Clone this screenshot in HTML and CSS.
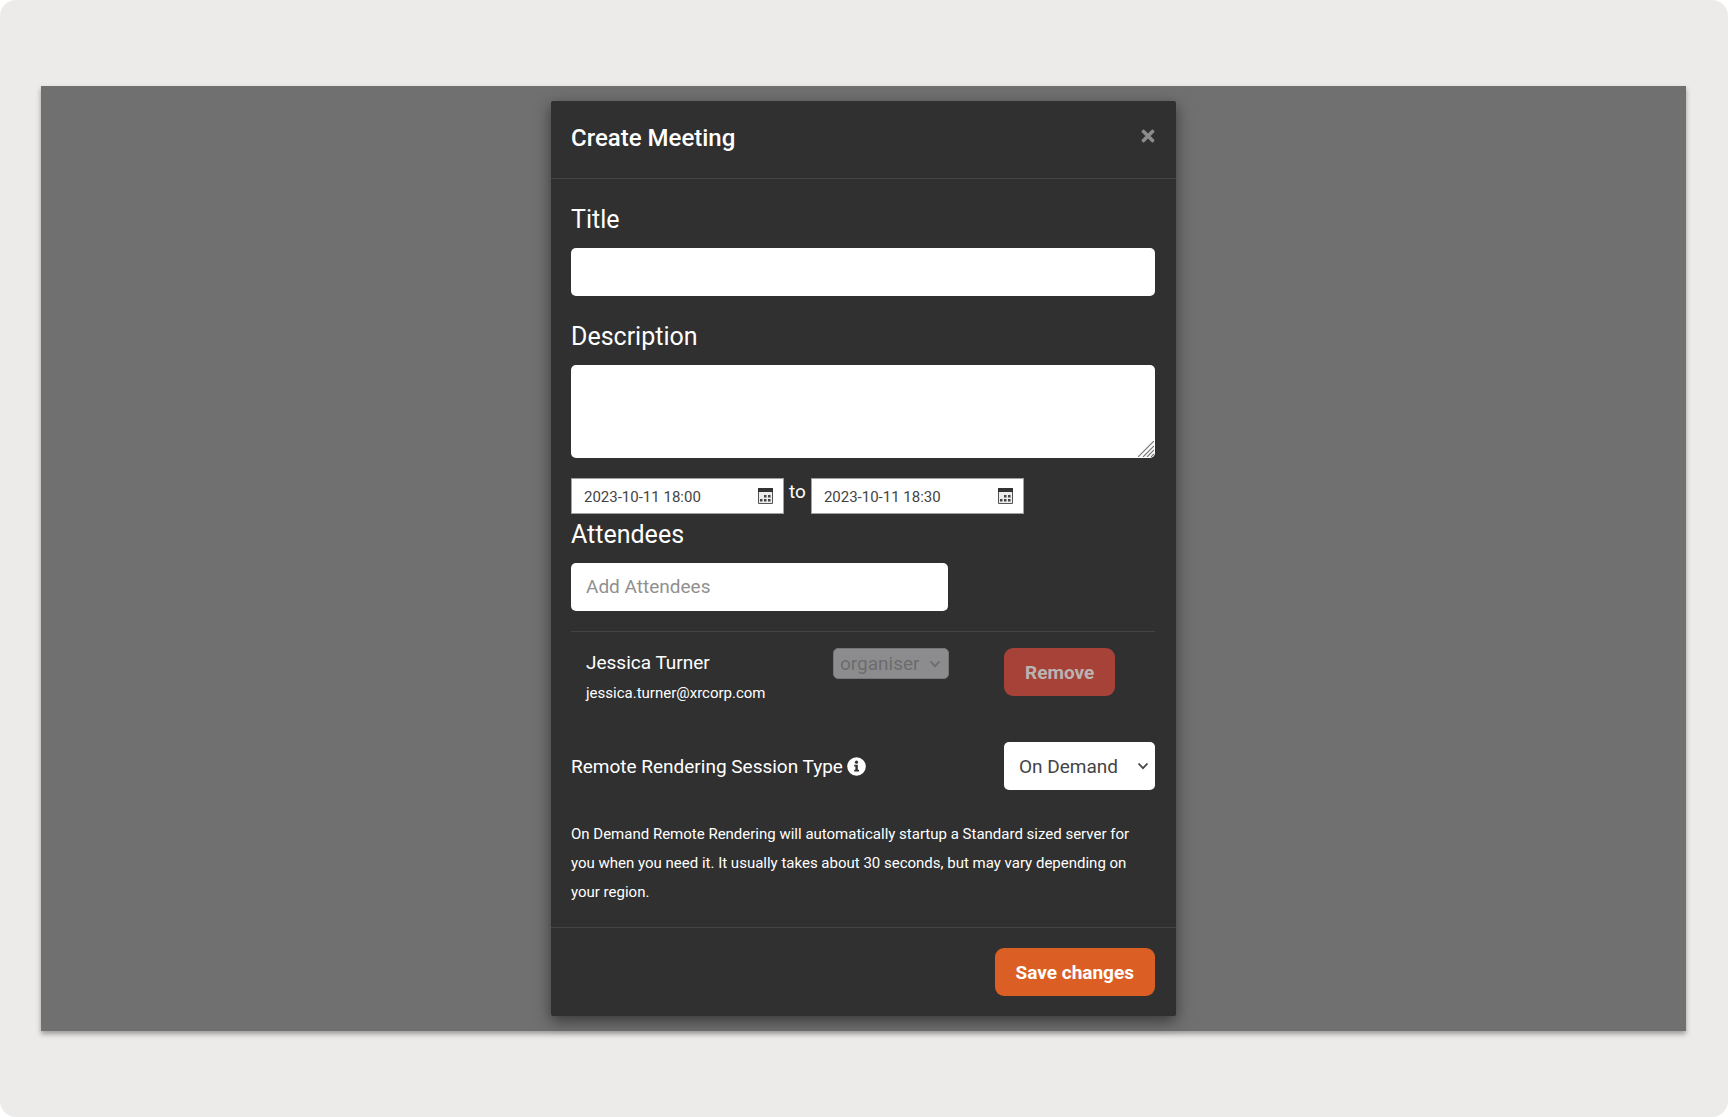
FILE: index.html
```html
<!DOCTYPE html>
<html lang="en">
<head>
<meta charset="utf-8">
<meta name="viewport" content="width=device-width, initial-scale=1">
<title>Create Meeting</title>
<link rel="stylesheet" href="styles.css">
</head>
<body>
<div class="page">
  <main class="stage">
    <form class="modal" role="dialog" aria-labelledby="dialog-title">
      <header class="modal-header">
        <h1 class="modal-title" id="dialog-title">Create Meeting</h1>
        <button class="close" type="button" aria-label="Close">
          <svg viewBox="0 0 14 14" width="14" height="14" aria-hidden="true"><path d="M2.5 2.5l9 9M11.5 2.5l-9 9" stroke="currentColor" stroke-width="3.6" stroke-linecap="round"/></svg>
        </button>
      </header>

      <div class="modal-body">
        <div class="field">
          <label class="label" for="title">Title</label>
          <input class="control" id="title" type="text">
        </div>
        <div class="field">
          <label class="label" for="description">Description</label>
          <div class="area-wrap">
            <textarea class="control area" id="description"></textarea>
            <svg class="grip" viewBox="0 0 16 16" width="16" height="16" aria-hidden="true"><path d="M0 16L16 0M5 16L16 5M9 16l7-7M13 16l3-3" stroke="#777" stroke-width="1.2"/></svg>
          </div>
        </div>

        <div class="dates">
          <div class="date">
            <input class="date-input" type="text" value="2023-10-11 18:00" aria-label="Start">
            <button class="date-button" type="button" aria-label="Pick start">
              <svg viewBox="0 0 15 16" width="15" height="16" aria-hidden="true"><path d="M.5.5h14v15H.5z" fill="#ececec" stroke="#555"/><path d="M0 0h15v4H0z" fill="#333"/><path d="M6 7h2.500v2.500H6zM10 7h2.500v2.500H10zM2 11h2.500v2.500H2zM6 11h2.500v2.500H6zM10 11h2.500v2.500H10z" fill="#444"/></svg>
            </button>
          </div>
          <span class="to">to</span>
          <div class="date">
            <input class="date-input" type="text" value="2023-10-11 18:30" aria-label="End">
            <button class="date-button" type="button" aria-label="Pick end">
              <svg viewBox="0 0 15 16" width="15" height="16" aria-hidden="true"><path d="M.5.5h14v15H.5z" fill="#ececec" stroke="#555"/><path d="M0 0h15v4H0z" fill="#333"/><path d="M6 7h2.500v2.500H6zM10 7h2.500v2.500H10zM2 11h2.500v2.500H2zM6 11h2.500v2.500H6zM10 11h2.500v2.500H10z" fill="#444"/></svg>
            </button>
          </div>
        </div>

        <div class="field">
          <label class="label" for="attendees">Attendees</label>
          <input class="control attendees" id="attendees" type="text" placeholder="Add Attendees">
        </div>

        <div class="attendee">
          <div class="person">
            <div class="name">Jessica Turner</div>
            <div class="email">jessica.turner@xrcorp.com</div>
          </div>
          <div class="select role">
            <select class="select-box" aria-label="Role" disabled><option>organiser</option></select>
            <svg class="chevron" viewBox="0 0 12 8" width="12" height="8" aria-hidden="true"><path d="M1.500 1.500L6 6.200l4.500-4.700" fill="none" stroke="currentColor" stroke-width="1.800"/></svg>
          </div>
          <button class="button remove" type="button" disabled>Remove</button>
        </div>

        <div class="session">
          <label class="session-label" for="session">Remote Rendering Session Type
            <svg class="info" viewBox="0 0 19 19" width="19" height="19" aria-hidden="true"><circle cx="9.500" cy="9.500" r="9.300" fill="#fff"/><circle cx="9.500" cy="5.200" r="1.600" fill="#303030"/><path d="M7.200 7.800h3.600v5h1.200v1.700H7.200v-1.700h1.200V9.500H7.200z" fill="#303030"/></svg>
          </label>
          <div class="select demand">
            <select class="select-box" id="session"><option>On Demand</option></select>
            <svg class="chevron" viewBox="0 0 12 8" width="12" height="8" aria-hidden="true"><path d="M1.500 1.500L6 6.200l4.500-4.700" fill="none" stroke="currentColor" stroke-width="1.800"/></svg>
          </div>
        </div>

        <p class="hint">On Demand Remote Rendering will automatically startup a Standard sized server for you when you need it. It usually takes about 30 seconds, but may vary depending on your region.</p>
      </div>

      <footer class="modal-footer">
        <button class="button save" type="submit">Save changes</button>
      </footer>
    </form>
  </main>
</div>
</body>
</html>
```
FILE: styles.css
```css
* { box-sizing: border-box; }

body {
  margin: 0;
  background: #fff;
  color: #fff;
  font: 19px/29px Roboto, "Liberation Sans", sans-serif;
}

button, input, select, textarea { font: inherit; margin: 0; }

.page {
  min-height: 100vh;
  padding: 86px 42px 86px 41px;
  border-radius: 16px;
  background: #ecebe9;
}

.stage {
  padding: 15px;
  background: #707070;
  box-shadow: 0 3px 5px rgba(0, 0, 0, .35);
}

.modal {
  max-width: 625px;
  margin: 0 auto;
  background: #303030;
  border-radius: 2px;
  box-shadow: 0 5px 15px rgba(0, 0, 0, .5);
}

.modal-header {
  display: flex;
  justify-content: space-between;
  align-items: flex-start;
  padding: 20px 21px 23px 20px;
  border-bottom: 1px solid #444;
}

.modal-title { margin: 0; font-size: 24px; line-height: 34px; font-weight: 500; }

.close {
  display: flex;
  padding: 8px 0;
  border: 0;
  background: none;
  color: #8c8c8c;
}

.modal-body { padding: 20px 21px 20px 20px; }

.field { margin-bottom: 20px; }

.label {
  display: block;
  margin-bottom: 8px;
  font-size: 25px;
  line-height: 41px;
}

.control {
  display: block;
  width: 100%;
  height: 48px;
  padding: 0 15px 2px;
  border: 0;
  border-radius: 5px;
  background: #fff;
  color: #444;
}

.control::placeholder { color: #909090; opacity: 1; }

.area-wrap { position: relative; }
.area { height: 93px; padding: 10px 15px; resize: none; }
.grip { position: absolute; right: 1px; bottom: 1px; }
.attendees { max-width: 377px; }

.dates { display: flex; gap: 5px; }

.date {
  display: flex;
  align-items: center;
  width: 213px;
  height: 36px;
  padding: 0 10px 0 12px;
  border: 1px solid #a0a0a0;
  background: #fff;
}

.date-input {
  flex: 1;
  min-width: 0;
  padding: 2px 0 0;
  border: 0;
  background: none;
  color: #444;
  font-size: 15px;
}

.date-button { display: flex; padding: 0; border: 0; background: none; }
.to { line-height: 28px; }

.attendee {
  display: grid;
  grid-template-columns: 262px 171px 1fr;
  align-items: start;
  padding: 16px 0 34px;
  border-top: 1px solid #444;
}

.person { padding-left: 15px; line-height: 30px; }
.email { font-size: 15px; line-height: 30px; }

.select { display: grid; align-items: center; }
.select-box, .chevron { grid-area: 1 / 1; }
.chevron { justify-self: end; margin-right: 6px; pointer-events: none; }

.select-box {
  appearance: none;
  width: 100%;
  border: 0;
  border-radius: 5px;
  opacity: 1;
}

.role { width: 116px; color: #6c6c6c; }
.role .select-box { height: 31px; padding: 0 6px; border: 1px solid #777; background: #8c8c8e; color: #6c6c6c; }
.role .chevron { margin-right: 8px; }
.demand { width: 151px; color: #444; }
.demand .select-box { height: 48px; padding: 0 15px; background: #fff; color: #444; }

.button {
  height: 48px;
  padding: 0 21px;
  border: 0;
  border-radius: 9px;
  color: #fff;
  font-weight: 700;
}

.remove { justify-self: start; background: #a64238; color: #b9b3b2; }
.save { background: #db5f25; }

.session { display: flex; justify-content: space-between; align-items: center; }
.session-label { display: flex; align-items: center; gap: 4px; }

.hint { margin: 30px 0 0; font-size: 15px; line-height: 29px; }

.modal-footer {
  display: flex;
  justify-content: flex-end;
  padding: 20px 21px 20px 20px;
  border-top: 1px solid #444;
}
```
